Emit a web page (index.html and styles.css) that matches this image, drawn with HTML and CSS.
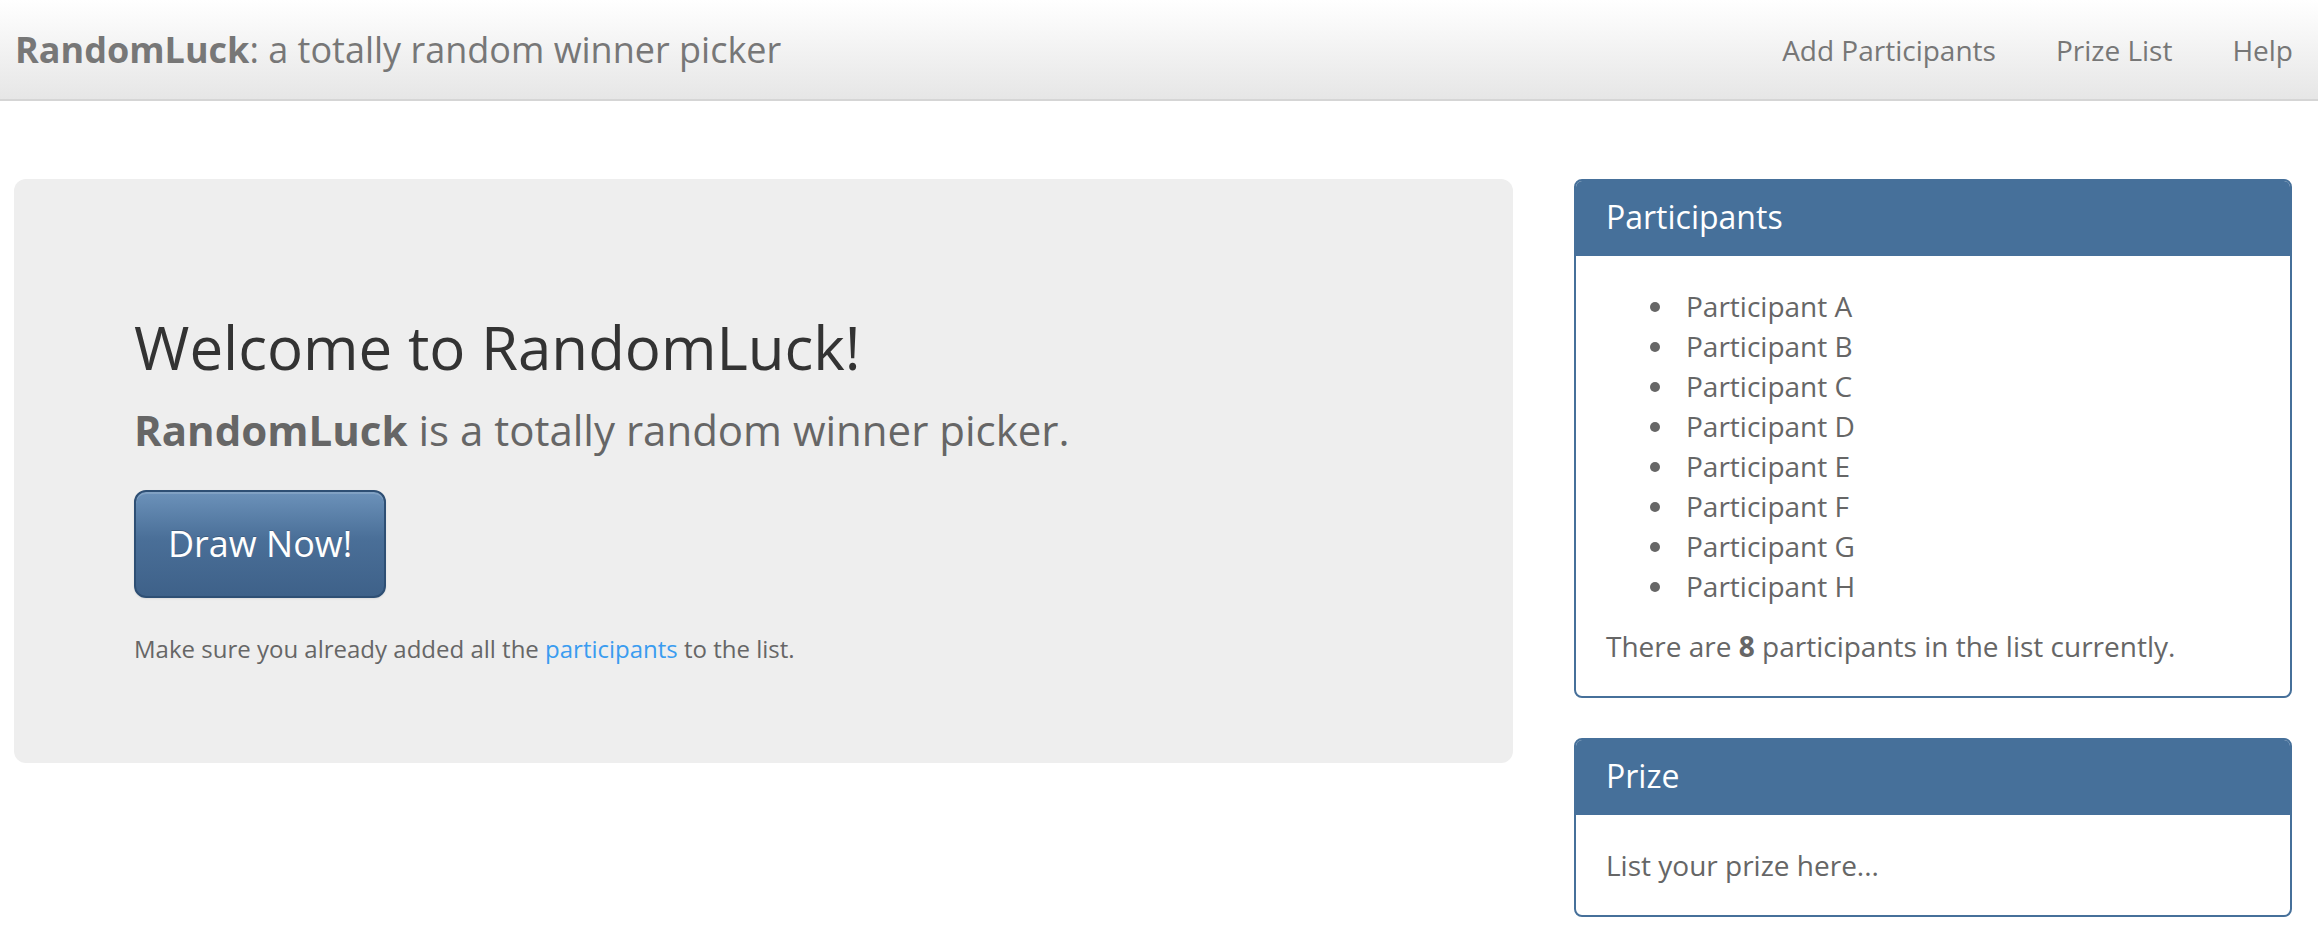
FILE: index.html
```html
<!DOCTYPE html>
<html lang="en">
<head>
<meta charset="utf-8">
<title>RandomLuck</title>
<link rel="stylesheet" href="styles.css">
</head>
<body>
<header class="navbar">
  <div class="brand"><strong>RandomLuck</strong>: a totally random winner picker</div>
  <nav class="nav">
    <a href="#">Add Participants</a>
    <a href="#">Prize List</a>
    <a href="#">Help</a>
  </nav>
</header>
<main class="main">
  <section class="jumbotron">
    <h2 class="title">Welcome to RandomLuck!</h2>
    <p class="lead"><strong>RandomLuck</strong> is a totally random winner picker.</p>
    <a class="btn" href="#">Draw Now!</a>
    <p class="note">Make sure you already added all the <a href="#">participants</a> to the list.</p>
  </section>
  <aside class="side">
    <div class="panel">
      <div class="panel-heading">Participants</div>
      <div class="panel-body">
        <ul class="plist">
          <li>Participant A</li>
          <li>Participant B</li>
          <li>Participant C</li>
          <li>Participant D</li>
          <li>Participant E</li>
          <li>Participant F</li>
          <li>Participant G</li>
          <li>Participant H</li>
        </ul>
        <p class="count">There are <strong>8</strong> participants in the list currently.</p>
      </div>
    </div>
    <div class="panel">
      <div class="panel-heading">Prize</div>
      <div class="panel-body">
        <p class="count">List your prize here...</p>
      </div>
    </div>
  </aside>
</main>
</body>
</html>
```

FILE: styles.css
```css
html, body {
  margin: 0;
  padding: 0;
  background: #fff;
}
body {
  font-family: "Open Sans", "Noto Sans", sans-serif;
  font-size: 28px;
  line-height: 40px;
  color: #666;
}
a {
  text-decoration: none;
}
.navbar {
  display: flex;
  justify-content: space-between;
  align-items: center;
  height: 99px;
  border-bottom: 2px solid #d5d5d5;
  background: linear-gradient(to bottom, #ffffff 0%, #e6e6e6 100%);
  padding: 0 25px 0 15px;
}
.brand {
  font-size: 36px;
  line-height: 40px;
  color: #777;
}
.brand strong {
  font-weight: 700;
}
.nav {
  display: flex;
  gap: 60px;
}
.nav a {
  color: #777;
  font-size: 28px;
  line-height: 40px;
}
.main {
  display: flex;
  align-items: flex-start;
  gap: 61px;
  padding: 0 26px 0 14px;
  margin-top: 78px;
}
.jumbotron {
  flex: 1;
  background: #eeeeee;
  border-radius: 12px;
  padding: 96px 120px;
}
.title {
  margin: 39px 0 20px;
  font-size: 60px;
  line-height: 66px;
  font-weight: 400;
  color: #333;
}
.lead {
  margin: 0 0 30px;
  font-size: 42px;
  line-height: 60px;
  color: #666;
}
.lead strong {
  font-weight: 700;
}
.btn {
  display: inline-block;
  padding: 28px 32px;
  font-size: 36px;
  line-height: 48px;
  color: #fff;
  border: 2px solid #2e4f74;
  border-radius: 12px;
  background: linear-gradient(to bottom, #6c92ba 0%, #4a6f98 45%, #3e6189 100%);
  text-shadow: 0 -1px 0 rgba(0, 0, 0, 0.2);
  box-shadow: inset 0 2px 0 rgba(255, 255, 255, 0.15), 0 1px 2px rgba(0, 0, 0, 0.08);
  margin-bottom: 32px;
}
.note {
  margin: 0;
  font-size: 24px;
  line-height: 37px;
  color: #666;
}
.note a {
  color: #3a9cf0;
}
.side {
  width: 718px;
  flex: none;
}
.panel {
  border: 2px solid #46709a;
  border-radius: 8px;
  margin-bottom: 40px;
  overflow: hidden;
  background: #fff;
}
.panel-heading {
  background: #46709a;
  color: #fff;
  font-size: 32px;
  line-height: 35px;
  padding: 18px 30px 22px;
}
.panel-body {
  padding: 30px;
}
.plist {
  margin: 0 0 20px;
  padding-left: 80px;
  list-style: none;
}
.plist li::before {
  content: "";
  display: inline-block;
  width: 10px;
  height: 10px;
  border-radius: 50%;
  background: #666;
  margin-left: -36px;
  margin-right: 26px;
  vertical-align: 5px;
}
.count {
  margin: 0;
}
.count strong {
  font-weight: 700;
}
```
